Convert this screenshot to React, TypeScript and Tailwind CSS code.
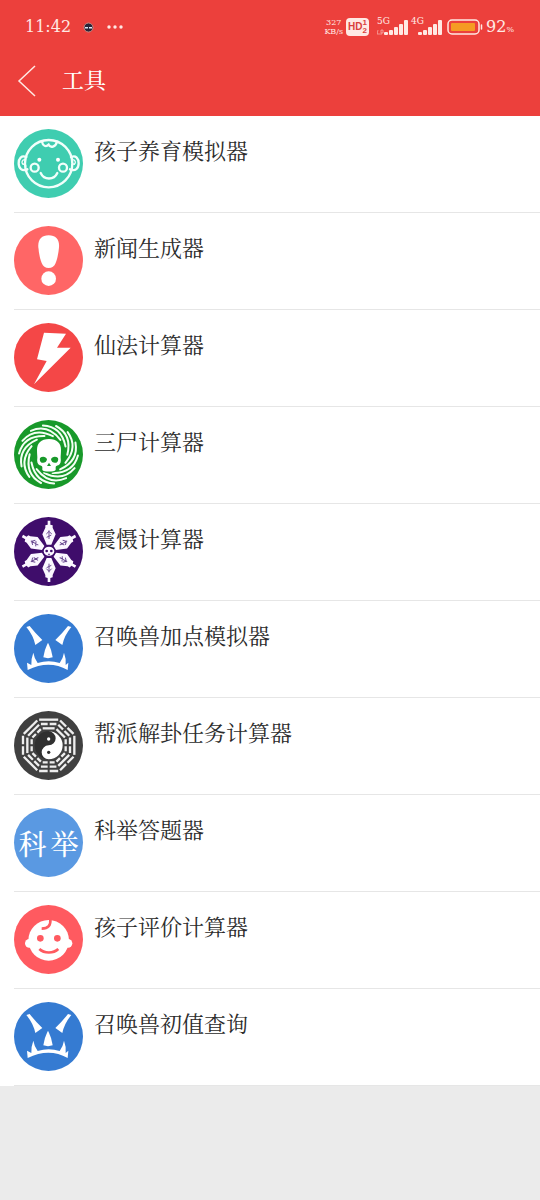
import React from 'react';

const WHITE = '#fff';

const ChildSimIcon = () => (
  <svg viewBox="0 0 207 207" className="w-full h-full" fill="none" stroke="#f2fffb" strokeWidth="7" strokeLinecap="round">
    <circle cx="103.5" cy="103.5" r="103.5" fill="#3fcdb0" stroke="none" />
    <path d="M37 84C22 78 14 88 14 103s10 25 26 18M171 84c15-6 23 4 23 19s-10 25-26 18" />
    <path d="M35 92c-11-2-14 10-8 14 6-3 9 2 8 8M173 92c11-2 14 10 8 14-6-3-9 2-8 8" strokeWidth="4" />
    <circle cx="104" cy="104" r="71" />
    <path d="M84 38c2 13 12 17 20 9 5 10 21 8 25-9" />
    <circle cx="62" cy="116" r="12" />
    <circle cx="147" cy="116" r="12" />
    <circle cx="76" cy="92" r="6" fill={WHITE} stroke="none" />
    <circle cx="132" cy="92" r="6" fill={WHITE} stroke="none" />
    <path d="M80 132c10 22 40 22 50 0" />
  </svg>
);

const NewsIcon = () => (
  <svg viewBox="0 0 207 207" className="w-full h-full" fill={WHITE}>
    <circle cx="103.5" cy="103.5" r="103.5" fill="#ff6666" />
    <path d="M104 28c22 0 33 13 31 36-2 20-5 34-10 47-4 10-11 15-21 15s-17-5-21-15C78 98 75 84 73 64c-2-23 9-36 31-36z" />
    <circle cx="104" cy="158" r="22" />
  </svg>
);

const SpellIcon = () => (
  <svg viewBox="0 0 207 207" className="w-full h-full" fill={WHITE}>
    <circle cx="103.5" cy="103.5" r="103.5" fill="#f44747" />
    <path d="M90 29l66 3-27 42h41L60 184l38-70-29-5z" />
  </svg>
);

const CorpseIcon = () => (
  <svg viewBox="0 0 207 207" className="w-full h-full" fill={WHITE}>
    <circle cx="103.5" cy="103.5" r="103.5" fill="#18992a" />
    {Array.from({ length: 14 }, (_, i) => (
      <path
        key={i}
        d="M47 103Q32 163 81 189"
        fill="none"
        stroke="#f4fff4"
        strokeWidth="6"
        strokeLinecap="round"
        transform={`rotate(${(i * 360) / 14} 103.5 103.5)`}
      />
    ))}
    <path
      d="M105 57c24 0 36 13 36 32 0 12-1 17-1 24 2 12-1 20-7 23-5 2-7 1-8 6v8c-4 6-36 6-40 0v-8c-1-5-3-4-8-6-6-3-9-11-7-23 0-7-1-12-1-24 0-19 12-32 36-32z"
      stroke="#18992a"
      strokeWidth="8"
      paintOrder="stroke"
    />
    <path d="M78 114c7-6 19-4 21 4-1 9-9 12-16 10-4-2-7-7-5-14zM132 114c-7-6-19-4-21 4 1 9 9 12 16 10 4-2 7-7 5-14zM105 128l6 10H99z" fill="#18992a" />
  </svg>
);

const FearIcon = () => (
  <svg viewBox="0 0 207 207" className="w-full h-full" fill="#fbf7ff">
    <circle cx="103.5" cy="103.5" r="103.5" fill="#3f0d6b" />
    {[0, 60, 120, 180, 240, 300].map((angle) => (
      <g key={angle} transform={`translate(105 103) rotate(${angle})`}>
        <path d="M-4-92h8v12l7 2v7l9 20L7-20H-7l-13-31 9-20v-7l7-2z" />
        <path d="M0-63v26M-8-52l8-8 8 8M-7-42l14-7" fill="none" stroke="#6b4b91" strokeWidth="3" />
      </g>
    ))}
    <ellipse cx="105" cy="103" rx="18" ry="16" stroke="#3f0d6b" strokeWidth="4" />
    <circle cx="98" cy="102" r="4" fill="#3f0d6b" />
    <circle cx="112" cy="102" r="4" fill="#3f0d6b" />
    <path d="M103 110h4v5h-4z" fill="#3f0d6b" />
  </svg>
);

const BeastIcon = () => (
  <svg viewBox="0 0 207 207" className="w-full h-full" fill={WHITE}>
    <circle cx="103.5" cy="103.5" r="103.5" fill="#357bd2" />
    <path d="M37 39l10-3q17 22 38 42l-21 15Q58 64 37 39zM172 39l-10-3q-17 22-38 42l21 15Q151 64 172 39z" />
    <path d="M101 88h2q10 20 13 42-14 5-28 0 3-22 13-42z" />
    <path d="M58 116q3 18 13 31 33-10 66 0 10-13 13-31 7 18 5 37l8-7-2 22q-56-32-120 0l-2-22 13 7q-1-19 6-37z" />
  </svg>
);

// 1 = solid line, 0 = broken line, outermost first
const TRIGRAMS = [
  [1, 0, 1],
  [0, 0, 1],
  [1, 0, 0],
  [0, 1, 0],
  [0, 0, 0],
  [1, 0, 0],
  [0, 1, 0],
  [1, 1, 0],
];

const BaguaIcon = () => (
  <svg viewBox="0 0 207 207" className="w-full h-full">
    <circle cx="103.5" cy="103.5" r="103.5" fill="#404040" />
    <g transform="translate(104 103)">
      {TRIGRAMS.map((lines, side) => (
        <g key={side} transform={`rotate(${side * 45})`} stroke="#eee" strokeWidth="7">
          {lines.map((solid, ring) => {
            const r = 77 - ring * 13;
            const half = r * 0.41 - 3;
            return solid ? (
              <path key={ring} d={`M${-half} ${-r}H${half}`} />
            ) : (
              <path key={ring} d={`M${-half} ${-r}H-3M3 ${-r}H${half}`} />
            );
          })}
        </g>
      ))}
      <circle r="42" fill="#303030" />
      <path d="M0-42A42 42 0 0 1 0 42A21 21 0 0 1 0 0A21 21 0 0 0 0-42z" fill={WHITE} />
      <circle cy="-19" r="5" fill={WHITE} />
      <circle cy="21" r="5" fill="#303030" />
    </g>
  </svg>
);

const ExamIcon = () => (
  <span className="w-full h-full rounded-full bg-[#5a99e2] text-white flex items-center justify-center gap-1 text-[28px] leading-none font-medium">
    <span>科</span>
    <span>举</span>
  </span>
);

const ChildRateIcon = () => (
  <svg viewBox="0 0 207 207" className="w-full h-full" fill={WHITE}>
    <circle cx="103.5" cy="103.5" r="103.5" fill="#ff5a60" />
    <circle cx="104" cy="106" r="61" />
    <circle cx="46" cy="115" r="13" />
    <circle cx="162" cy="115" r="13" />
    <circle cx="79" cy="100" r="10" fill="#ff5a60" />
    <circle cx="130" cy="100" r="10" fill="#ff5a60" />
    <path d="M76 132c15 14 42 14 57 0M109 42c2 19-6 29-26 29" fill="none" stroke="#ff5a60" strokeWidth="8" />
  </svg>
);

const TOOLS = [
  { name: '孩子养育模拟器', Icon: ChildSimIcon },
  { name: '新闻生成器', Icon: NewsIcon },
  { name: '仙法计算器', Icon: SpellIcon },
  { name: '三尸计算器', Icon: CorpseIcon },
  { name: '震慑计算器', Icon: FearIcon },
  { name: '召唤兽加点模拟器', Icon: BeastIcon },
  { name: '帮派解卦任务计算器', Icon: BaguaIcon },
  { name: '科举答题器', Icon: ExamIcon },
  { name: '孩子评价计算器', Icon: ChildRateIcon },
  { name: '召唤兽初值查询', Icon: BeastIcon },
];

const Signal: React.FC<{ label: string; extra?: boolean }> = ({ label, extra }) => (
  <div className="relative w-8 h-5">
    <span className="absolute left-0 top-0 text-[9px] leading-none">{label}</span>
    <svg viewBox="0 0 32 20" className="w-8 h-5" fill="currentColor">
      {extra && <path d="M1 13l-1 4h3M4 18v-5h2v3H4" fill="none" stroke="currentColor" strokeWidth="0.7" opacity="0.7" />}
      <rect x="7" y="15" width="4" height="3" rx="1" />
      <rect x="12" y="13" width="4" height="5" rx="1" />
      <rect x="17" y="10" width="4" height="8" rx="1" />
      <rect x="22" y="7" width="4" height="11" rx="1" />
      <rect x="27" y="3" width="4" height="15" rx="1" />
    </svg>
  </div>
);

const StatusBar = () => (
  <div className="h-[54px] pl-[25px] pr-[26px] flex items-center justify-between text-[#ffe9e4]">
    <div className="flex items-center gap-3">
      <span className="text-base">11:42</span>
      <svg viewBox="0 0 11 11" className="w-[11px] h-[11px]">
        <circle cx="5.5" cy="5.5" r="4.5" fill="#2a2438" stroke="#c48d86" strokeWidth="1" />
        <path d="M2 5h3v1.500H2zM6 5h3v1.500H6z" fill="#dce8f5" />
      </svg>
      <svg viewBox="0 0 18 4" className="w-[18px] h-1" fill="currentColor">
        <circle cx="3" cy="2" r="1.700" />
        <circle cx="9" cy="2" r="1.700" />
        <circle cx="15" cy="2" r="1.700" />
      </svg>
    </div>

    <div className="flex items-center">
      <div className="text-[8px] leading-[9px] text-center">
        <div>327</div>
        <div>KB/s</div>
      </div>
      <div className="ml-[3px] w-[23px] h-[18px] rounded bg-[#ffe9e4] text-[#d9403c] flex items-center justify-center font-['Liberation_Sans',sans-serif] font-bold">
        <span className="text-[10px] leading-none">HD</span>
        <span className="text-[8px] leading-[8px]">
          <span className="block">1</span>
          <span className="block">2</span>
        </span>
      </div>
      <div className="ml-2 flex gap-[2px]">
        <Signal label="5G" extra />
        <Signal label="4G" />
      </div>
      <svg viewBox="0 0 36 16" className="ml-1 w-9 h-4">
        <rect x="1" y="1" width="31" height="14" rx="4" fill="none" stroke="currentColor" strokeWidth="1.500" />
        <rect x="4" y="4" width="24" height="8" rx="1" fill="#f59b23" />
        <path d="M34.500 6v4" stroke="currentColor" strokeWidth="1.500" strokeLinecap="round" />
      </svg>
      <span className="ml-[3px] text-base">
        92<span className="text-[8px]">%</span>
      </span>
    </div>
  </div>
);

export default function App() {
  return (
    <div className="min-h-screen bg-[#ebebeb] font-['Noto_Serif_CJK_SC','Noto_Sans_CJK_SC',serif]">
      <header className="bg-[#ec403c] font-['DejaVu_Serif','Noto_Serif_CJK_SC','Noto_Sans_CJK_SC',serif]">
        <StatusBar />
        <div className="h-[62px] pb-2 flex items-center">
          <button aria-label="返回" className="ml-4 text-[#ffe9e4]">
            <svg viewBox="0 0 22 32" className="w-[22px] h-8" fill="none" stroke="currentColor" strokeWidth="1.500">
              <path d="M19 1L3 16l16 15" />
            </svg>
          </button>
          <h1 className="ml-6 text-[22px] leading-7 text-white font-medium">工具</h1>
        </div>
      </header>

      <ul className="bg-white">
        {TOOLS.map(({ name, Icon }) => (
          <li key={name} className="pl-3.5">
            <a href="#" className="h-[97px] pt-[13px] flex items-start border-b border-[#e6e6e6] text-[#2b2b2b]">
              <span className="w-[69px] h-[69px] shrink-0">
                <Icon />
              </span>
              <span className="ml-[11px] mt-[7px] text-[22px] leading-7">{name}</span>
            </a>
          </li>
        ))}
      </ul>
    </div>
  );
}
